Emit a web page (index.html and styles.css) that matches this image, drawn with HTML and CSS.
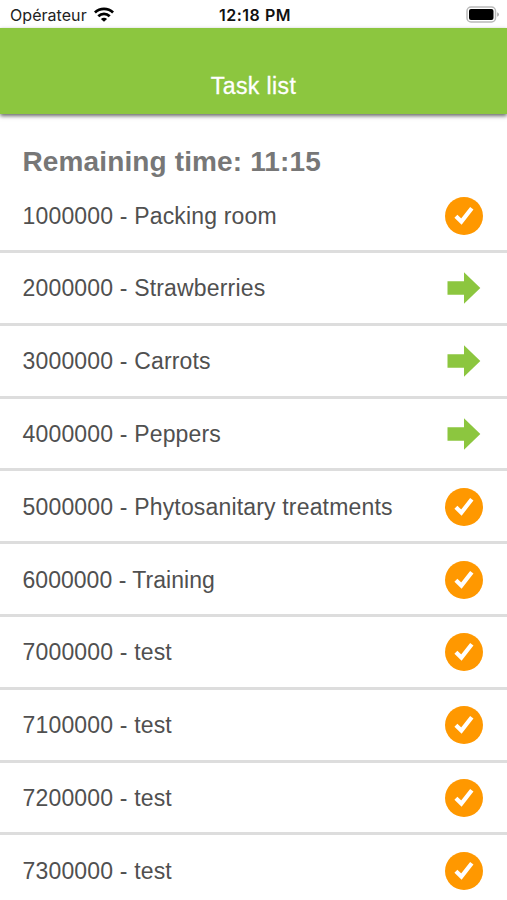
FILE: index.html
```html
<!DOCTYPE html>
<html lang="en">
<head>
<meta charset="utf-8">
<title>Task list</title>
<link rel="stylesheet" href="styles.css">
</head>
<body>
<svg class="defs" aria-hidden="true">
  <symbol id="check" viewBox="0 0 38 38"><circle cx="19" cy="19" r="19" fill="#ff9800"/><path d="M10.9 19.2 16.4 24.6 26.8 11.2" fill="none" stroke="#fff" stroke-width="4.2"/></symbol>
  <symbol id="arrow" viewBox="0 0 38 38"><path d="M2.5 12.3H19V3.2L35.3 19 19 34.8V25.8H2.5Z" fill="#8cc63f"/></symbol>
</svg>
<div class="status">
  <div class="carrier"><span>Opérateur</span>
    <svg class="wifi" viewBox="0 0 20 15"><g fill="none" stroke="#000" stroke-width="2.8"><path d="M.9 5.5C6 .6 14 .6 19.1 5.5"/><path d="M4.3 9.2C7.6 6.1 12.4 6.1 15.7 9.2"/></g><path d="M10 14.8 6.9 11.9C8.7 10.3 11.3 10.3 13.1 11.9Z"/></svg>
  </div>
  <div class="clock">12:18 PM</div>
  <svg class="battery" viewBox="0 0 34 17"><rect x="1" y="1" width="28.5" height="15" rx="4" fill="#fff" stroke="#b9b9b9" stroke-width="1.5"/><rect x="3" y="3" width="24.5" height="11" rx="2" fill="#000"/><path d="M31.2 6.2Q33 7 33 8.5T31.2 10.8Z" fill="#aaa"/></svg>
</div>
<header class="bar"><h1>Task list</h1></header>
<main>
  <h2><span>Remaining time: 11:15</span></h2>
  <ul>
    <li><span>1000000 - Packing room</span><svg><use href="#check"/></svg></li>
    <li><span>2000000 - Strawberries</span><svg><use href="#arrow"/></svg></li>
    <li><span>3000000 - Carrots</span><svg><use href="#arrow"/></svg></li>
    <li><span>4000000 - Peppers</span><svg><use href="#arrow"/></svg></li>
    <li><span>5000000 - Phytosanitary treatments</span><svg><use href="#check"/></svg></li>
    <li><span class="tight">6000000 - Training</span><svg><use href="#check"/></svg></li>
    <li><span>7000000 - test</span><svg><use href="#check"/></svg></li>
    <li><span>7100000 - test</span><svg><use href="#check"/></svg></li>
    <li><span>7200000 - test</span><svg><use href="#check"/></svg></li>
    <li><span>7300000 - test</span><svg><use href="#check"/></svg></li>
  </ul>
</main>
</body>
</html>
```
FILE: styles.css
```css
* { box-sizing: border-box; margin: 0; padding: 0; }
html, body { height: 900px; overflow: hidden; }
body { background: #fff; font-family: "Liberation Sans", Arial, sans-serif; color: #505050; }
.defs { display: none; }
.status { height: 28px; display: grid; grid-template-columns: 1fr auto 1fr; align-items: center; padding: 1px 7px 0 10px; color: #222; font-family: Inter, sans-serif; font-size: 16px; }
.carrier { display: flex; align-items: center; gap: 7px; letter-spacing: .05px; }
.wifi { width: 20px; height: 15px; }
.clock { font-weight: 600; letter-spacing: .5px; color: #111; }
.battery { width: 34px; height: 17px; justify-self: end; }
.bar { height: 86px; background: #8cc63f; box-shadow: 0 2px 4px rgba(0,0,0,.6); display: flex; justify-content: center; padding-top: 45px; }
h1 { color: #fff; font-size: 23px; line-height: 27px; font-weight: 400; letter-spacing: .4px; -webkit-text-stroke: .3px #fff; }
h2 { font-size: 28px; line-height: 32px; letter-spacing: .13px; color: #777; padding: 32px 22.5px 0; height: 66.2px; }
ul { list-style: none; }
li { height: 72.8px; border-bottom: 3px solid #ddd; padding: 0 24.5px 0 22.5px; display: flex; align-items: center; justify-content: space-between; font-size: 23px; letter-spacing: .17px; }
li span { padding-top: 2px; }
li .tight { letter-spacing: .03px; }
li svg { width: 38px; height: 38px; margin-top: 1px; }
```
